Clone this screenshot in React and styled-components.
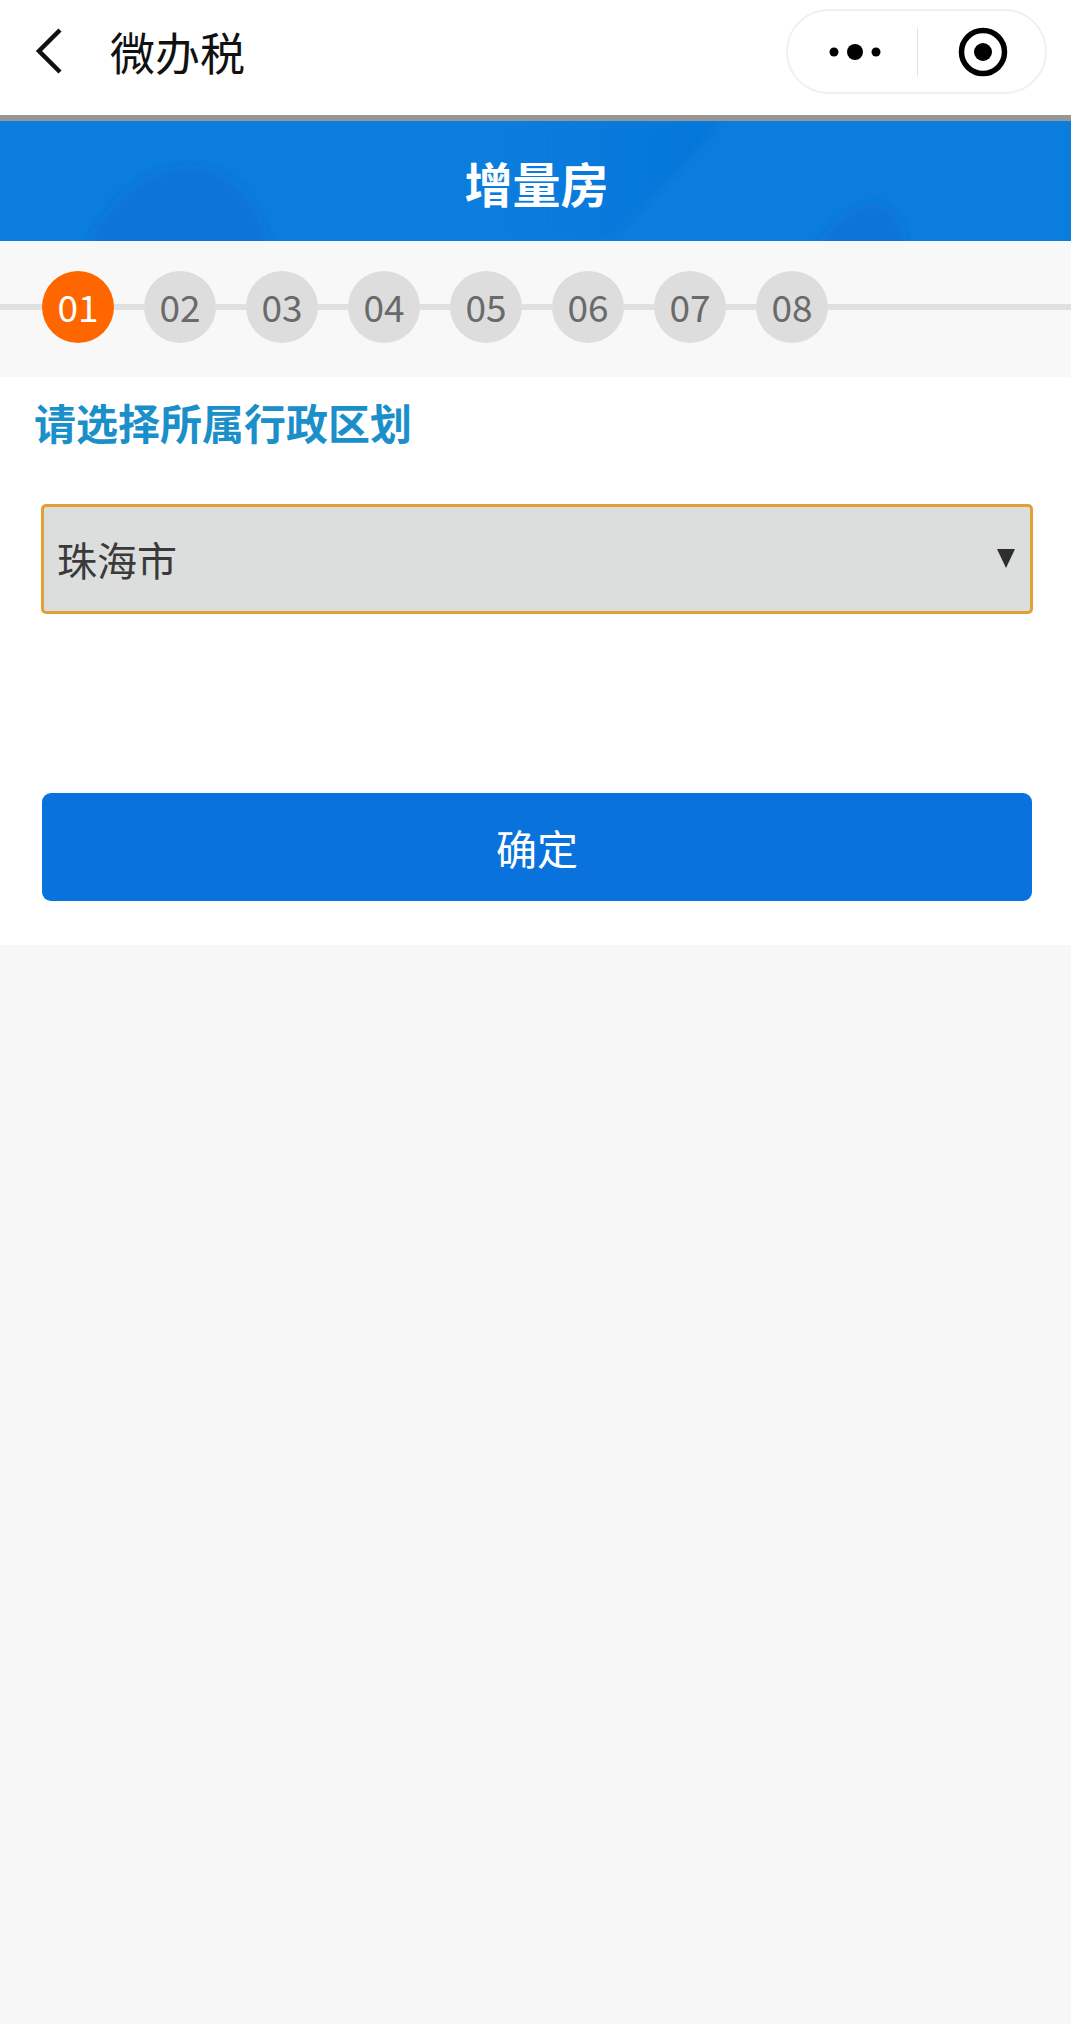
import React from "react";
import styled, { createGlobalStyle } from "styled-components";

const Global = createGlobalStyle`
  html, body { margin: 0; padding: 0; background: #f7f7f8; }
  body { font-family: "Noto Sans CJK SC", "Noto Sans", sans-serif; }
  * { box-sizing: border-box; }
`;

const Page = styled.div`
  width: 1071px;
  min-height: 2024px;
  background: #f7f7f8;
  display: flex;
  flex-direction: column;
`;

const NavBar = styled.div`
  height: 115px;
  flex: none;
  background: #fff;
  display: flex;
  align-items: center;
  padding: 0 24px 0 34px;
`;

const BackButton = styled.button`
  width: 29px;
  height: 48px;
  margin-top: -14px;
  padding: 0;
  border: 0;
  background: none;
  display: flex;
  align-items: center;
  justify-content: center;
`;

const NavTitle = styled.div`
  margin-left: 47px;
  margin-top: -12px;
  font-size: 45px;
  line-height: 60px;
  color: #111;
`;

const Capsule = styled.div`
  margin-left: auto;
  margin-top: -12px;
  width: 261px;
  height: 85px;
  border: 2px solid #f0f0f0;
  border-radius: 43px;
  background: #fff;
  display: flex;
  align-items: center;
`;

const CapsuleHalf = styled.div`
  flex: 1;
  height: 48px;
  display: flex;
  align-items: center;
  justify-content: center;
  &:first-child { padding-left: 5px; }
  & + & { border-left: 1px solid #e2e2e2; padding-left: 4px; }
`;

const BlueHeader = styled.header`
  position: relative;
  flex: none;
  height: 126px;
  border-top: 6px solid #979797;
  background: #0b7edd;
  overflow: hidden;
  display: flex;
  align-items: center;
  justify-content: center;
`;

const HeaderArt = styled.svg`
  position: absolute;
  inset: 0;
  width: 100%;
  height: 100%;
`;

const HeaderTitle = styled.h1`
  position: relative;
  margin: 2px 0 0 2px;
  font-size: 48px;
  line-height: 60px;
  font-weight: 700;
  color: #fff;
`;

const Steps = styled.div`
  flex: none;
  height: 136px;
  padding: 30px 0 0 42px;
  display: flex;
  align-items: flex-start;
  gap: 30px;
  background:
    linear-gradient(#e0e0e0, #e0e0e0) 0 63px / 100% 6px no-repeat,
    #f8f8f8;
`;

const Step = styled.div`
  width: 72px;
  height: 72px;
  flex: none;
  border-radius: 50%;
  background: ${(p) => (p.$active ? "#ff6600" : "#dddddd")};
  color: ${(p) => (p.$active ? "#fff" : "#6a6a6a")};
  font-size: 37px;
  display: flex;
  align-items: center;
  justify-content: center;
  padding-bottom: 2px;
`;

const Panel = styled.main`
  flex: none;
  height: 568px;
  background: #fff;
  padding: 15px 42px 0;
  display: flex;
  flex-direction: column;
`;

const Prompt = styled.h2`
  margin: 0 0 0 -8px;
  font-size: 42px;
  line-height: 60px;
  font-weight: 700;
  color: #1b8fc9;
`;

const SelectWrap = styled.div`
  position: relative;
  margin: 52px 0 0 -1px;
  width: 992px;
  height: 110px;
  &::after {
    content: "";
    position: absolute;
    right: 18px;
    top: 45px;
    border-left: 9px solid transparent;
    border-right: 9px solid transparent;
    border-top: 19px solid #2e2e2e;
  }
`;

const DistrictSelect = styled.select`
  appearance: none;
  width: 100%;
  height: 100%;
  padding: 0 0 0 13px;
  border: 3px solid #e0a032;
  border-radius: 5px;
  background: #dcdddd;
  color: #3a3a3a;
  font-family: inherit;
  font-size: 40px;
  outline: none;
`;

const ConfirmButton = styled.button`
  margin-top: 179px;
  width: 990px;
  height: 108px;
  border: 0;
  border-radius: 9px;
  background: #0a72dc;
  color: #fff;
  font-family: inherit;
  font-size: 41px;
`;

const steps = ["01", "02", "03", "04", "05", "06", "07", "08"];

export default function App() {
  return (
    <Page>
      <Global />
      <NavBar>
        <BackButton aria-label="返回">
          <svg width="28" height="48" viewBox="0 0 28 48">
            <path d="M25 3 L4 24 L25 45" fill="none" stroke="#111" strokeWidth="4.5" />
          </svg>
        </BackButton>
        <NavTitle>微办税</NavTitle>
        <Capsule>
          <CapsuleHalf>
            <svg width="60" height="20" viewBox="0 0 60 20">
              <circle cx="9" cy="10" r="4.5" fill="#000" />
              <circle cx="30" cy="10" r="8" fill="#000" />
              <circle cx="51" cy="10" r="4.5" fill="#000" />
            </svg>
          </CapsuleHalf>
          <CapsuleHalf>
            <svg width="50" height="50" viewBox="0 0 50 50">
              <circle cx="25" cy="25" r="21.5" fill="none" stroke="#000" strokeWidth="5.5" />
              <circle cx="25" cy="25" r="9" fill="#000" />
            </svg>
          </CapsuleHalf>
        </Capsule>
      </NavBar>
      <BlueHeader>
        <HeaderArt viewBox="0 0 1071 120" preserveAspectRatio="none">
          <defs>
            <filter id="soft" x="-20%" y="-20%" width="140%" height="140%">
              <feGaussianBlur stdDeviation="6" />
            </filter>
            <linearGradient id="band" x1="0" y1="0" x2="1" y2="0">
              <stop offset="0" stopColor="#0a72da" stopOpacity="0" />
              <stop offset="1" stopColor="#0a72da" stopOpacity="0.7" />
            </linearGradient>
          </defs>
          <path d="M82 130 C110 70 150 44 190 44 C240 44 265 90 272 130 Z" fill="#0a74da" filter="url(#soft)" />
          <path d="M470 0 L724 0 L615 120 L470 120 Z" fill="url(#band)" filter="url(#soft)" />
          <path d="M810 130 C835 95 860 79 880 82 C900 86 905 110 910 130 Z" fill="#0a74da" filter="url(#soft)" />
        </HeaderArt>
        <HeaderTitle>增量房</HeaderTitle>
      </BlueHeader>
      <Steps>
        {steps.map((s, i) => (
          <Step key={s} $active={i === 0}>{s}</Step>
        ))}
      </Steps>
      <Panel>
        <Prompt>请选择所属行政区划</Prompt>
        <SelectWrap>
          <DistrictSelect defaultValue="珠海市">
            <option>珠海市</option>
          </DistrictSelect>
        </SelectWrap>
        <ConfirmButton>确定</ConfirmButton>
      </Panel>
    </Page>
  );
}
